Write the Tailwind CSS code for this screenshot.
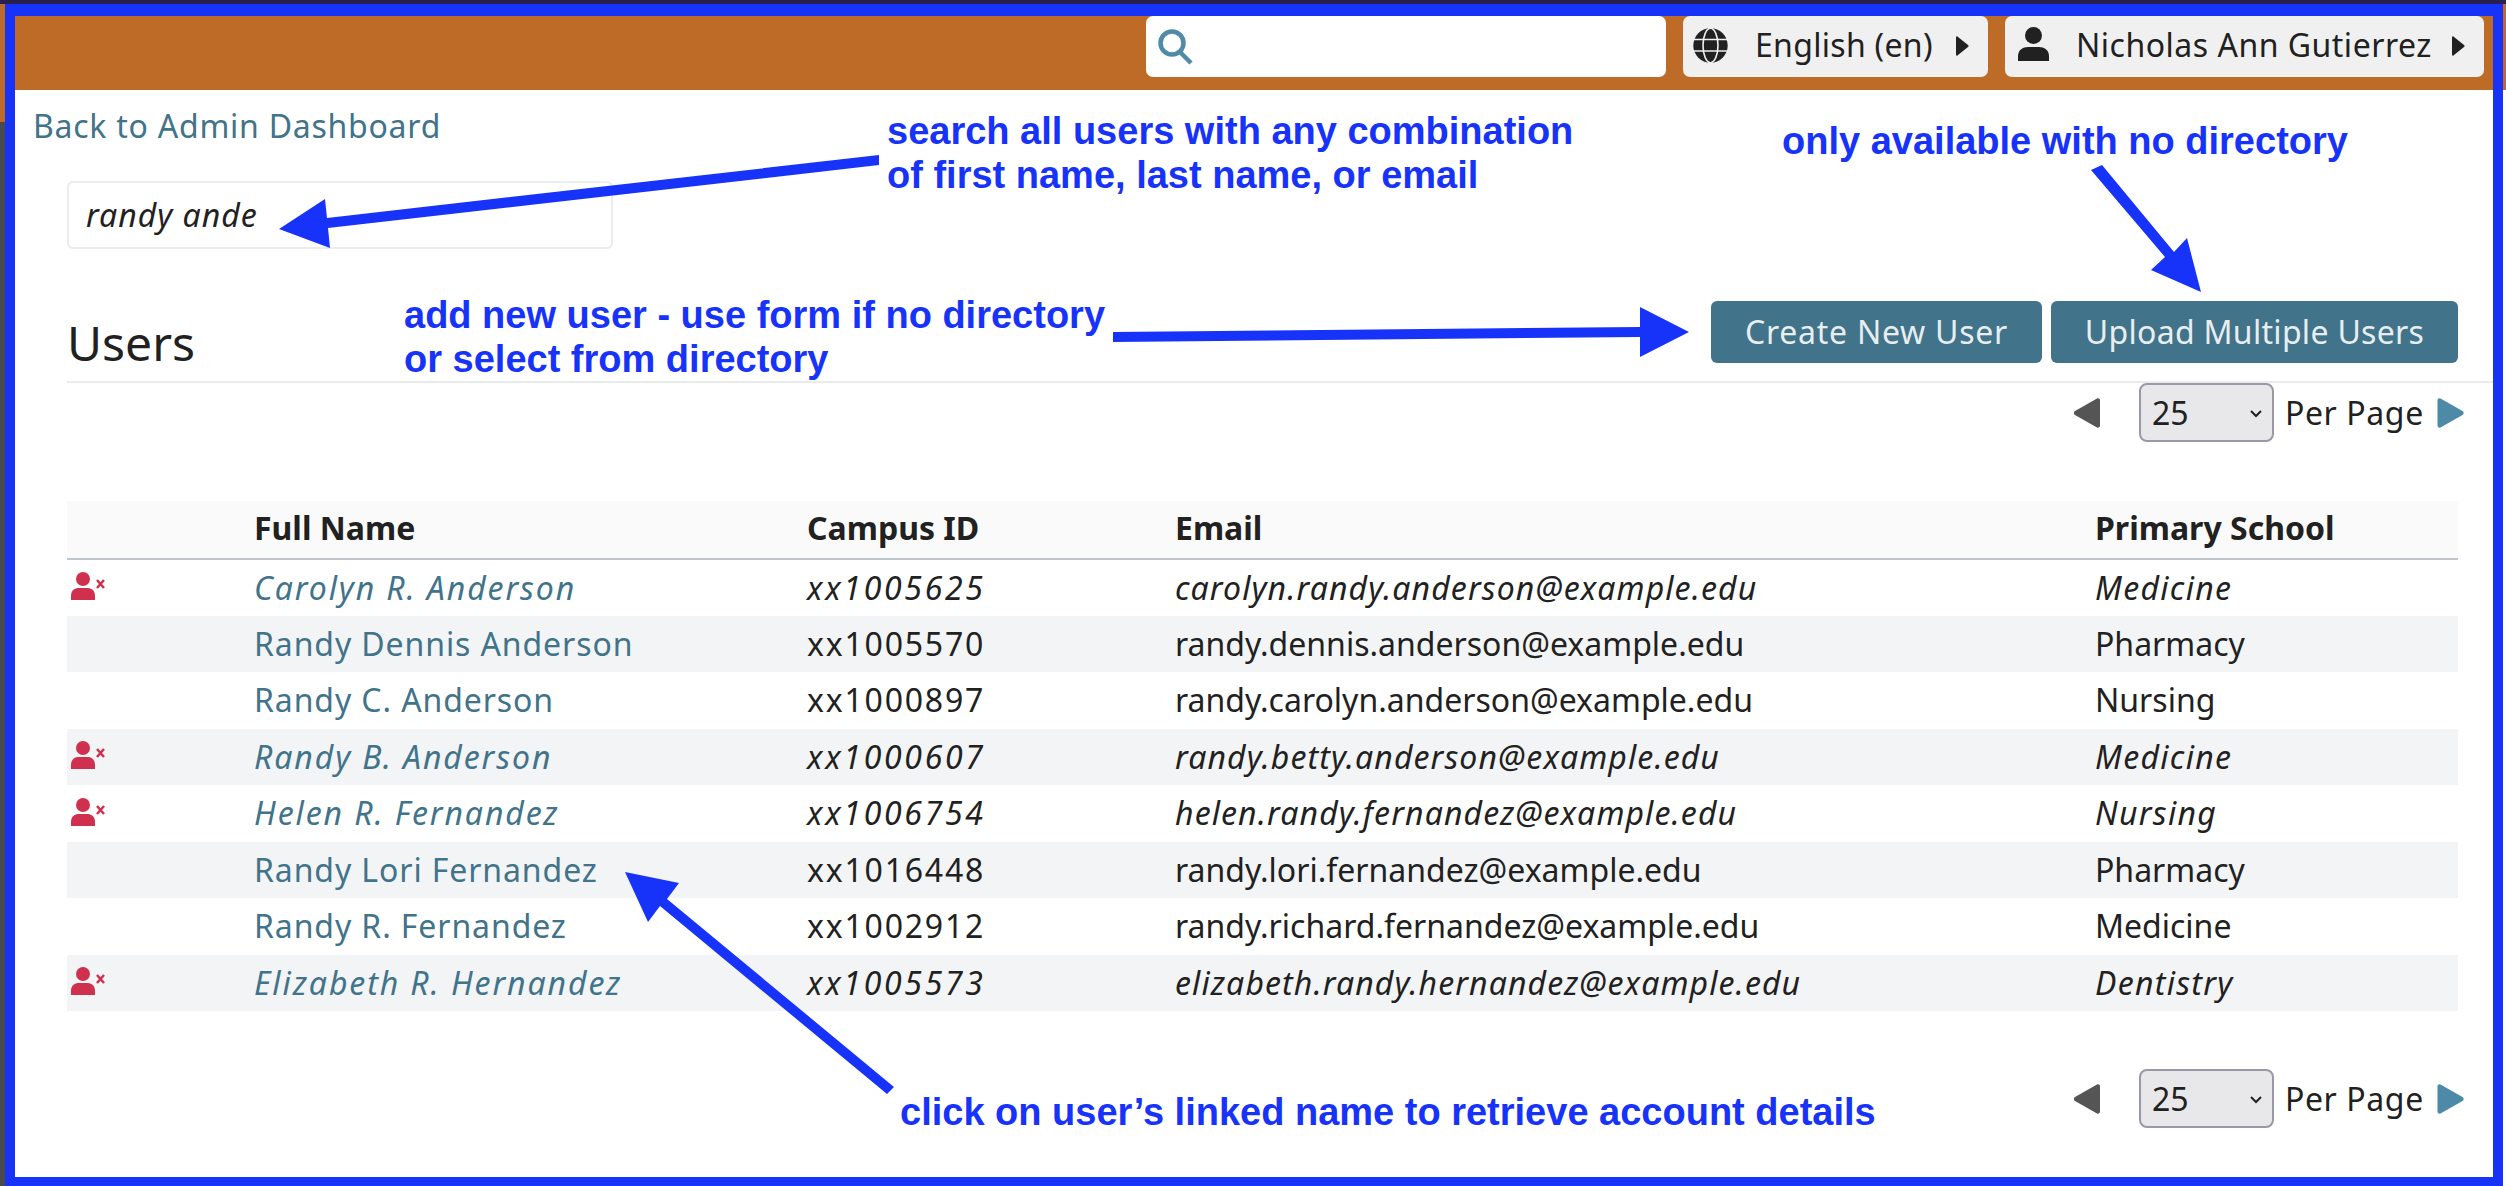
<!doctype html>
<html><head><meta charset="utf-8"><script src="https://cdn.jsdelivr.net/npm/@tailwindcss/browser@4"></script></head>
<body class="relative w-[2506px] h-[1186px] overflow-hidden bg-white font-['Noto_Sans',sans-serif] text-[#212121] text-[32px] leading-[48px]">
<div class="h-[4px] bg-[#2a2050]"></div>
<div class="flex h-[1182px]">
  <div class="w-[5px] flex flex-col"><div class="h-[118px] bg-[#bd6b27]"></div><div class="flex-1 bg-[#4a4a4a]"></div></div>
  <div class="w-[2498px] border-t-[12px] border-l-[10px] border-r-[10px] border-b-[9px] border-[#1733f9] bg-white flex flex-col">
    <header class="h-[74px] bg-[#bd6b27] flex justify-end gap-[17px] pr-[9px]">
      <div class="w-[520px] h-[61px] rounded-[7px] bg-white flex items-center pl-[12px]">
        <svg width="36" height="36" viewBox="0 0 36 36" fill="none" stroke="#4f8aa8" stroke-width="4.5" class="mt-[1px]"><circle cx="14" cy="14" r="11.5"/><path d="M22 23l11 11"/></svg>
      </div>
      <div class="w-[305px] h-[61px] rounded-[7px] bg-[#f0f0f0] flex items-center pl-[10px]">
        <svg width="35" height="35" viewBox="0 0 35 35" class="-mt-[3px]"><circle cx="17.5" cy="17.5" r="17.2" fill="#212121"/><ellipse cx="17.5" cy="17.5" rx="7.5" ry="17.2" fill="none" stroke="#f0f0f0" stroke-width="1.6"/><path d="M0 11.5h35M0 23h35" stroke="#f0f0f0" stroke-width="1.6"/></svg>
        <span class="ml-[27px] w-[201px] -mt-[3px] tracking-[0.3px]">English (en)</span>
        <svg width="14" height="22" viewBox="0 0 14 22" class="-mt-[1px]"><path d="M2 2l10 8a1.3 1.3 0 0 1 0 2L2 20a1 1 0 0 1-2-1V3a1 1 0 0 1 2-1z" fill="#212121"/></svg>
      </div>
      <div class="w-[479px] h-[61px] rounded-[7px] bg-[#f0f0f0] flex items-center pl-[13px]">
        <svg width="31" height="34" viewBox="0 0 31 34" class="-mt-[5px]"><circle cx="15.5" cy="8.5" r="8.5" fill="#212121"/><path d="M0 34v-5c0-6 5-9 10-9h11c5 0 10 3 10 9v5z" fill="#212121"/></svg>
        <span class="ml-[27px] w-[376px] -mt-[3px] whitespace-nowrap tracking-[0.5px]">Nicholas Ann Gutierrez</span>
        <svg width="14" height="22" viewBox="0 0 14 22" class="-mt-[1px]"><path d="M2 2l10 8a1.3 1.3 0 0 1 0 2L2 20a1 1 0 0 1-2-1V3a1 1 0 0 1 2-1z" fill="#212121"/></svg>
      </div>
    </header>
    <main class="flex-1 pl-[52px] pr-[32px]">
      <a class="block -ml-[34px] mt-[12px] text-[#41738a] tracking-[0.75px]">Back to Admin Dashboard</a>
      <input value="randy ande" class="block mt-[31px] w-[546px] h-[68px] border-2 border-[#eaeded] rounded-[6px] pl-[17px] pb-[2px] italic text-[32px] tracking-[1px]">
      <div class="mt-[52px] -mr-[32px] h-[82px] border-b-2 border-[#e9ecec] flex justify-between items-start pr-[35px]">
        <h2 class="mt-[13px] text-[48px] leading-[58px] font-normal">Users</h2>
        <div class="flex gap-[9px] text-[#e8eef0]">
          <button class="w-[331px] h-[62px] bg-[#41738a] rounded-[6px] tracking-[0.75px]">Create New User</button>
          <button class="w-[407px] h-[62px] bg-[#41738a] rounded-[6px] tracking-[0.3px]">Upload Multiple Users</button>
        </div>
      </div>
      <div class="flex justify-end items-center h-[59px] -mr-[3px]">
        <svg width="26" height="30" viewBox="0 0 26 30"><path d="M23 .6L1 13a2.3 2.3 0 0 0 0 4l22 12.4c1.4.7 3-.2 3-1.6V2.2c0-1.4-1.6-2.3-3-1.6z" fill="#555"/></svg>
        <div class="relative ml-[39px]">
          <select class="block appearance-none w-[135px] h-[59px] pl-[11px] bg-[#e8e8ea] border-2 border-[#9a98a8] rounded-[8px]"><option>25</option></select>
          <svg width="12" height="8" viewBox="0 0 12 8" fill="none" stroke="#212121" stroke-width="2" class="absolute right-[12px] top-[27px]"><path d="M1 1l5 5 5-5"/></svg>
        </div>
        <span class="ml-[11px] w-[152px] whitespace-nowrap tracking-[0.6px]">Per Page</span>
        <svg width="27" height="30" viewBox="0 0 26 30"><path d="M3 .6L25 13a2.3 2.3 0 0 1 0 4L3 29.4C1.6 30.100 0 29.200 0 27.800V2.200C0 .8 1.600-.1 3 .6z" fill="#4d8aa8"/></svg>
      </div>
      <table class="mt-[59px] w-[2391px] table-fixed border-collapse">
        <colgroup><col class="w-[187px]"><col class="w-[553px]"><col class="w-[368px]"><col class="w-[920px]"><col class="w-[363px]"></colgroup>
        <thead><tr class="h-[58px] bg-[#fafafa] border-b-2 border-[#bfc5ca] text-left">
          <th></th><th class="font-bold pb-[3px]">Full Name</th><th class="font-bold pb-[3px]">Campus ID</th><th class="font-bold pb-[3px]">Email</th><th class="font-bold pb-[3px]">Primary School</th></tr></thead>
        <tbody>
          <tr class="h-[56.5px] italic"><td class="pl-[4px]"><svg width="34" height="28" viewBox="0 0 34 28" class="-mt-[3px]"><circle cx="12" cy="7" r="7" fill="#cf304e"/><path d="M0 28v-4c0-6 4-8 8-8h8c4 0 8 2 8 8v4z" fill="#cf304e"/><path d="M26 8l7 8M33 8l-7 8" stroke="#cf304e" stroke-width="2.500"/></svg></td><td class="tracking-[1.9px]"><a class="text-[#41738a]">Carolyn R. Anderson</a></td><td class="tracking-[2.7px]">xx1005625</td><td class="tracking-[1.1px]">carolyn.randy.anderson@example.edu</td><td class="tracking-[1.3px]">Medicine</td></tr>
          <tr class="h-[56.5px] bg-[#f3f4f6]"><td></td><td class="tracking-[0.9px]"><a class="text-[#41738a]">Randy Dennis Anderson</a></td><td class="tracking-[1.8px]">xx1005570</td><td>randy.dennis.anderson@example.edu</td><td>Pharmacy</td></tr>
          <tr class="h-[56.5px]"><td></td><td class="tracking-[0.9px]"><a class="text-[#41738a]">Randy C. Anderson</a></td><td class="tracking-[1.8px]">xx1000897</td><td>randy.carolyn.anderson@example.edu</td><td>Nursing</td></tr>
          <tr class="h-[56.5px] italic bg-[#f3f4f6]"><td class="pl-[4px]"><svg width="34" height="28" viewBox="0 0 34 28" class="-mt-[3px]"><circle cx="12" cy="7" r="7" fill="#cf304e"/><path d="M0 28v-4c0-6 4-8 8-8h8c4 0 8 2 8 8v4z" fill="#cf304e"/><path d="M26 8l7 8M33 8l-7 8" stroke="#cf304e" stroke-width="2.500"/></svg></td><td class="tracking-[1.9px]"><a class="text-[#41738a]">Randy B. Anderson</a></td><td class="tracking-[2.7px]">xx1000607</td><td class="tracking-[1.1px]">randy.betty.anderson@example.edu</td><td class="tracking-[1.3px]">Medicine</td></tr>
          <tr class="h-[56.5px] italic"><td class="pl-[4px]"><svg width="34" height="28" viewBox="0 0 34 28" class="-mt-[3px]"><circle cx="12" cy="7" r="7" fill="#cf304e"/><path d="M0 28v-4c0-6 4-8 8-8h8c4 0 8 2 8 8v4z" fill="#cf304e"/><path d="M26 8l7 8M33 8l-7 8" stroke="#cf304e" stroke-width="2.500"/></svg></td><td class="tracking-[1.9px]"><a class="text-[#41738a]">Helen R. Fernandez</a></td><td class="tracking-[2.7px]">xx1006754</td><td class="tracking-[1.1px]">helen.randy.fernandez@example.edu</td><td class="tracking-[1.3px]">Nursing</td></tr>
          <tr class="h-[56.5px] bg-[#f3f4f6]"><td></td><td class="tracking-[0.9px]"><a class="text-[#41738a]">Randy Lori Fernandez</a></td><td class="tracking-[1.8px]">xx1016448</td><td>randy.lori.fernandez@example.edu</td><td>Pharmacy</td></tr>
          <tr class="h-[56.5px]"><td></td><td class="tracking-[0.9px]"><a class="text-[#41738a]">Randy R. Fernandez</a></td><td class="tracking-[1.8px]">xx1002912</td><td>randy.richard.fernandez@example.edu</td><td>Medicine</td></tr>
          <tr class="h-[56.5px] italic bg-[#f3f4f6]"><td class="pl-[4px]"><svg width="34" height="28" viewBox="0 0 34 28" class="-mt-[3px]"><circle cx="12" cy="7" r="7" fill="#cf304e"/><path d="M0 28v-4c0-6 4-8 8-8h8c4 0 8 2 8 8v4z" fill="#cf304e"/><path d="M26 8l7 8M33 8l-7 8" stroke="#cf304e" stroke-width="2.500"/></svg></td><td class="tracking-[1.9px]"><a class="text-[#41738a]">Elizabeth R. Hernandez</a></td><td class="tracking-[2.7px]">xx1005573</td><td class="tracking-[1.1px]">elizabeth.randy.hernandez@example.edu</td><td class="tracking-[1.3px]">Dentistry</td></tr>
        </tbody>
      </table>
      <div class="flex justify-end items-center h-[59px] mt-[58px] -mr-[3px]">
        <svg width="26" height="30" viewBox="0 0 26 30"><path d="M23 .6L1 13a2.3 2.3 0 0 0 0 4l22 12.4c1.4.7 3-.2 3-1.6V2.2c0-1.4-1.6-2.3-3-1.6z" fill="#555"/></svg>
        <div class="relative ml-[39px]">
          <select class="block appearance-none w-[135px] h-[59px] pl-[11px] bg-[#e8e8ea] border-2 border-[#9a98a8] rounded-[8px]"><option>25</option></select>
          <svg width="12" height="8" viewBox="0 0 12 8" fill="none" stroke="#212121" stroke-width="2" class="absolute right-[12px] top-[27px]"><path d="M1 1l5 5 5-5"/></svg>
        </div>
        <span class="ml-[11px] w-[152px] whitespace-nowrap tracking-[0.6px]">Per Page</span>
        <svg width="27" height="30" viewBox="0 0 26 30"><path d="M3 .6L25 13a2.3 2.3 0 0 1 0 4L3 29.4C1.6 30.100 0 29.200 0 27.800V2.200C0 .8 1.600-.1 3 .6z" fill="#4d8aa8"/></svg>
      </div>
    </main>
  </div>
  <div class="w-[3px] flex flex-col"><div class="h-[86px] bg-[#bd6b27]"></div></div>
</div>

<svg class="absolute left-0 top-0 pointer-events-none" width="2506" height="1186" viewBox="0 0 2506 1186" fill="#1733f9">
  <polygon points="879,155 327,218 325,199 279,229 330,248 328,228 879,165"/>
  <polygon points="1113,332 1640,327 1640,307 1689,332 1640,357 1640,337 1113,342"/>
  <polygon points="2091,170 2102,165 2174,252 2187,238 2201,292 2151,270 2165,257"/>
  <polygon points="625,872 679,883 667,899 894,1087 887,1094 660,906 648,922"/>
</svg>
<div class="absolute left-[887px] top-[109px] font-['Liberation_Sans',sans-serif] font-bold text-[38px] leading-[44px] text-[#1733f9] whitespace-nowrap">search all users with any combination<br>of first name, last name, or email</div>
<div class="absolute left-[1782px] top-[119px] font-['Liberation_Sans',sans-serif] font-bold text-[38px] leading-[44px] text-[#1733f9] whitespace-nowrap">only available with no directory</div>
<div class="absolute left-[404px] top-[293px] font-['Liberation_Sans',sans-serif] font-bold text-[38px] leading-[44px] text-[#1733f9] whitespace-nowrap">add new user - use form if no directory<br>or select from directory</div>
<div class="absolute left-[900px] top-[1090px] font-['Liberation_Sans',sans-serif] font-bold text-[38px] leading-[44px] text-[#1733f9] whitespace-nowrap">click on user’s linked name to retrieve account details</div>
</body></html>
